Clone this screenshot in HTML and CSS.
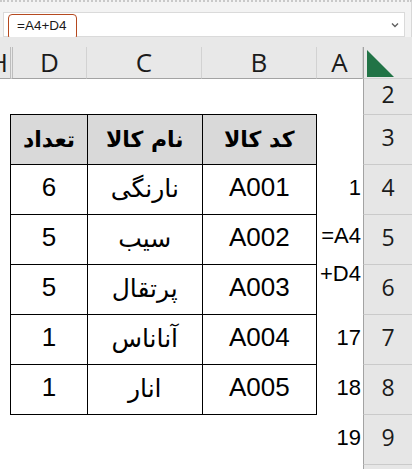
FILE: index.html
```html
<!DOCTYPE html>
<html lang="fa">
<head>
<meta charset="utf-8">
<title>Sheet</title>
<link rel="stylesheet" href="styles.css">
</head>
<body>
<div class="app">
  <div class="fbar">
    <div class="fx">
      <span class="ref">=A4+D4</span>
      <svg class="chev" width="8" height="6" viewBox="0 0 8 6"><path d="M1 1.5 L4 4.5 L7 1.5" fill="none" stroke="#606060" stroke-width="1.4"/></svg>
    </div>
  </div>
  <div class="sheet">
    <div class="colhdr">
      <div class="ch ch-h"><span>H</span></div>
      <div class="ch ch-d">D</div>
      <div class="ch">C</div>
      <div class="ch">B</div>
      <div class="ch">A</div>
      <div class="corner"><svg width="27" height="27" viewBox="0 0 27 27"><path d="M0 0 L0 27 L27 27 Z" fill="#217346"/></svg></div>
    </div>

    <table class="tbl">
      <tr><th>تعداد</th><th>نام کالا</th><th>کد کالا</th></tr>
      <tr><td class="num">6</td><td class="fa">نارنگی</td><td class="num">A001</td></tr>
      <tr><td class="num">5</td><td class="fa">سیب</td><td class="num">A002</td></tr>
      <tr><td class="num">5</td><td class="fa">پرتقال</td><td class="num">A003</td></tr>
      <tr><td class="num">1</td><td class="fa">آناناس</td><td class="num">A004</td></tr>
      <tr><td class="num">1</td><td class="fa">انار</td><td class="num">A005</td></tr>
    </table>

    <div class="av r4">1</div>
    <div class="av r5 wrap">=A4<br>+D4</div>
    <div class="av r7">17</div>
    <div class="av r8">18</div>
    <div class="av r9">19</div>

    <div class="rh r2">2</div>
    <div class="rh r3">3</div>
    <div class="rh r4">4</div>
    <div class="rh r5">5</div>
    <div class="rh r6">6</div>
    <div class="rh r7">7</div>
    <div class="rh r8">8</div>
    <div class="rh r9">9</div>
    <div class="rh r10"></div>
  </div>
</div>
</body>
</html>
```

FILE: styles.css
```css
* { box-sizing: border-box; }
html, body { margin: 0; padding: 0; }
body {
  width: 412px;
  height: 469px;
  overflow: hidden;
  background: #ffffff;
  font-family: "Liberation Sans", "DejaVu Sans", sans-serif;
  color: #000;
}

.fbar {
  height: 37px;
  background: #f3f3f3;
  padding: 10px 6px 0 3px;
  border-top: 2px dotted #c9c9c9;
  border-right: 1px solid #d8d8d8;
}
.fx {
  height: 25px;
  background: #ffffff;
  border: 1px solid #dadada;
  display: flex;
  align-items: flex-start;
  justify-content: space-between;
}
.ref {
  margin: 1px 0 0 4px;
  width: 69px;
  height: 26px;
  border: 1px solid #b5491f;
  border-radius: 4px;
  padding-left: 8px;
  font-size: 13.5px;
  line-height: 22px;
  color: #1a1a1a;
  background: #ffffff;
}
.chev { margin: 9px 5px 0 0; }

.sheet {
  display: grid;
  grid-template-columns: 10px 77px 115px 115px 46px 49px;
  grid-template-rows: 42px 36px 50px repeat(6, 50px) 20px;
}

.colhdr {
  grid-column: 1 / -1;
  grid-row: 1;
  display: grid;
  grid-template-columns: 10px 77px 115px 115px 46px 49px;
  background: #e8e8e8;
  padding-top: 10px;
}
.ch {
  display: flex;
  align-items: center;
  justify-content: center;
  font-family: "Open Sans", "Noto Sans", sans-serif;
  font-size: 26px;
  line-height: 1;
  color: #1b1b1b;
  border-right: 1px solid #d2d2d2;
  border-bottom: 1px solid #a3a3a3;
  padding-bottom: 2px;
}
.ch-h {
  justify-content: flex-end;
  padding-right: 2px;
  border-right: none;
  overflow: hidden;
}
.ch-d { border-left: 3px double #bdbdbd; }
.corner {
  border-left: 1px solid #a3a3a3;
  border-bottom: 1px solid #d0d0d0;
  padding: 3px 0 0 3px;
}
.corner svg { display: block; }

.tbl {
  grid-column: 2 / 5;
  grid-row: 3 / 9;
  border-collapse: collapse;
  width: 307px;
  height: 301px;
  table-layout: fixed;
  margin-top: -1px;
}
.tbl th, .tbl td {
  border: 1px solid #000;
  height: 50px;
  padding: 0;
  text-align: center;
  vertical-align: middle;
}
.tbl th:nth-child(1), .tbl td:nth-child(1) { width: 77px; }
.tbl th {
  background: #d9d9d9;
  font-family: "DejaVu Sans", sans-serif;
  font-weight: bold;
  font-size: 22px;
}
.tbl td.num {
  font-size: 26px;
  padding-bottom: 4px;
}
.tbl td.fa {
  font-family: "DejaVu Sans", sans-serif;
  font-size: 25px;
  padding-bottom: 3px;
}

.av {
  grid-column: 5;
  text-align: right;
  padding-right: 2px;
  font-size: 22px;
  display: flex;
  align-items: center;
  justify-content: flex-end;
  padding-bottom: 4px;
}
.av.wrap {
  display: block;
  line-height: 38px;
  white-space: nowrap;
  overflow: visible;
  padding-top: 2px;
  padding-bottom: 0;
}

.rh {
  grid-column: 6;
  background: #e6e6e6;
  border-left: 1px solid #a3a3a3;
  border-bottom: 1px solid #cacaca;
  display: flex;
  align-items: center;
  justify-content: center;
  font-family: "Open Sans", "Noto Sans", sans-serif;
  font-size: 23px;
  line-height: 1;
  color: #1b1b1b;
  padding-bottom: 4px;
}

.r2 { grid-row: 2; }
.r3 { grid-row: 3; }
.r4 { grid-row: 4; }
.r5 { grid-row: 5; }
.r6 { grid-row: 6; }
.r7 { grid-row: 7; }
.r8 { grid-row: 8; }
.r9 { grid-row: 9; }
.r10 { grid-row: 10; }
```
